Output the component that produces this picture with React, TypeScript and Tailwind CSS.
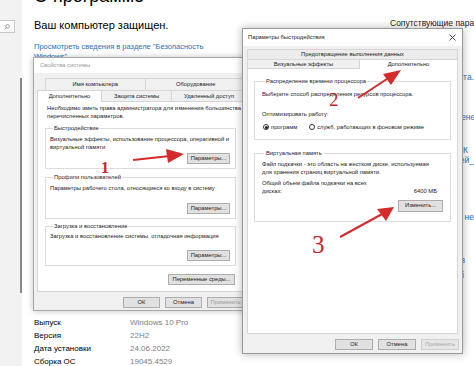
import React from "react";

const F = { fontFamily: "'Liberation Sans', Arial, sans-serif" };

function Btn({ children, className = "" }: { children: React.ReactNode; className?: string }) {
  return (
    <div
      className={`flex items-center justify-center h-[11px] border border-[#adadad] bg-[#e1e1e1] text-[5.8px] leading-none whitespace-nowrap text-[#222] ${className}`}
    >
      {children}
    </div>
  );
}

function Group({ title, children, className = "" }: { title: string; children: React.ReactNode; className?: string }) {
  return (
    <fieldset className={`border border-[#dcdcdc] ${className}`}>
      <legend className="ml-[3px] px-[1px] text-[5.8px] leading-[8px] text-[#222] whitespace-nowrap">{title}</legend>
      {children}
    </fieldset>
  );
}

function SystemDialog() {
  return (
    <div className="absolute left-[33px] top-[57px] w-[215px] h-[254px] flex flex-col bg-[#f0f0f0] border border-[#a8a8a8] shadow-[0_0_6px_rgba(0,0,0,0.25)]">
      <div className="h-[15px] bg-white flex items-center pl-[6px] text-[5.8px] text-[#999]">Свойства системы</div>
      <div className="mt-[5px] flex flex-col text-[5.8px] text-[#222] whitespace-nowrap">
        <div className="flex pl-[11px] h-[12px]">
          <div className="w-[102px] border border-b-0 border-[#d6d6d6] bg-[#f0f0f0] flex items-center justify-center">Имя компьютера</div>
          <div className="w-[103px] border border-b-0 border-l-0 border-[#d6d6d6] bg-[#f0f0f0] flex items-center justify-center">Оборудование</div>
        </div>
        <div className="flex pl-[3px] h-[12px]">
          <div className="w-[65px] border border-b-0 border-[#d6d6d6] bg-white flex items-center justify-center">Дополнительно</div>
          <div className="w-[70px] border border-l-0 border-[#d6d6d6] bg-[#f0f0f0] flex items-center justify-center">Защита системы</div>
          <div className="w-[75px] border border-l-0 border-[#d6d6d6] bg-[#f0f0f0] flex items-center justify-center">Удаленный доступ</div>
        </div>
      </div>
      <div className="mx-[3px] h-[190px] bg-white border border-t-0 border-[#d6d6d6] flex flex-col px-[7px] pt-[2px] text-[5.8px] leading-[8px] text-[#222] whitespace-nowrap">
        <div className="pl-[2px]">
          Необходимо иметь права администратора для изменения большинства
          <br />
          перечисленных параметров.
        </div>
        <Group title="Быстродействие" className="mt-[4px] h-[45px] px-[4px] flex flex-col">
          <div className="mt-[3px]">
            Визуальные эффекты, использование процессора, оперативной и
            <br />
            виртуальной памяти
          </div>
          <Btn className="self-end w-[43px] mt-[2px] mr-[1px]">Параметры...</Btn>
        </Group>
        <Group title="Профили пользователей" className="mt-[4px] h-[46px] px-[4px] flex flex-col">
          <div className="mt-[3px]">Параметры рабочего стола, относящиеся ко входу в систему</div>
          <Btn className="self-end w-[43px] mt-[11px] mr-[1px]">Параметры...</Btn>
        </Group>
        <Group title="Загрузка и восстановление" className="mt-[3px] h-[44px] px-[4px] flex flex-col">
          <div className="mt-[2px]">Загрузка и восстановление системы, отладочная информация</div>
          <Btn className="self-end w-[43px] mt-[10px] mr-[1px]">Параметры...</Btn>
        </Group>
        <Btn className="self-end w-[67px] mt-[8px] mr-[1px]">Переменные среды...</Btn>
      </div>
      <div className="flex gap-[5px] pl-[89px] mt-[5px]">
        <Btn className="w-[37px]">ОК</Btn>
        <Btn className="w-[37px]">Отмена</Btn>
        <Btn className="w-[37px] text-[#999]">Применить</Btn>
      </div>
    </div>
  );
}

function Radio({ on, label }: { on?: boolean; label: string }) {
  return (
    <div className="flex items-center gap-[2px]">
      <div className="w-[6px] h-[6px] rounded-full border border-[#333] bg-white flex items-center justify-center">
        {on && <div className="w-[3px] h-[3px] rounded-full bg-[#222]" />}
      </div>
      <span>{label}</span>
    </div>
  );
}

function PerfDialog() {
  return (
    <div className="absolute left-[242px] top-[28px] w-[221px] h-[326px] flex flex-col bg-[#f0f0f0] border border-[#9a9a9a] shadow-[0_0_8px_rgba(0,0,0,0.3)]">
      <div className="h-[17px] bg-white flex items-center justify-between pl-[5px] pr-[5px] text-[5.8px] text-[#222]">
        <span>Параметры быстродействия</span>
        <svg width="7" height="7" viewBox="0 0 7 7" className="mr-[1px]">
          <path d="M0.5 0.5 L6.5 6.5 M6.5 0.5 L0.5 6.5" stroke="#333" strokeWidth="0.9" />
        </svg>
      </div>
      <div className="mt-[3px] px-[4px] flex flex-col text-[5.8px] text-[#222] whitespace-nowrap">
        <div className="h-[10px] border border-b-0 border-[#d6d6d6] bg-[#ececec] flex items-center justify-center">
          Предотвращение выполнения данных
        </div>
        <div className="flex h-[10px]">
          <div className="w-[113px] border border-[#d6d6d6] bg-[#f0f0f0] flex items-center justify-center">Визуальные эффекты</div>
          <div className="flex-1 border border-b-0 border-l-0 border-[#d6d6d6] bg-white flex items-center justify-center">Дополнительно</div>
        </div>
      </div>
      <div className="mx-[4px] h-[265px] bg-white border border-t-0 border-[#d6d6d6] flex flex-col px-[6px] pt-[8px] text-[5.8px] leading-[8px] text-[#222] whitespace-nowrap">
        <Group title="Распределение времени процессора" className="h-[63px] px-[7px] flex flex-col">
          <div className="mt-[5px]">Выберите способ распределения ресурсов процессора.</div>
          <div className="mt-[12px]">Оптимизировать работу:</div>
          <div className="mt-[5px] flex gap-[12px] pl-[1px]">
            <Radio on label="программ" />
            <Radio label="служб, работающих в фоновом режиме" />
          </div>
        </Group>
        <Group title="Виртуальная память" className="mt-[9px] h-[73px] px-[7px] flex flex-col">
          <div className="mt-[3px]">
            Файл подкачки - это область на жестком диске, используемая
            <br />
            для хранения страниц виртуальной памяти.
          </div>
          <div className="mt-[3px] flex items-end justify-between pr-[6px]">
            <div>
              Общий объем файла подкачки на всех
              <br />
              дисках:
            </div>
            <div>6400 МБ</div>
          </div>
          <Btn className="self-end w-[45px] mt-[5px] h-[12px]">Изменить...</Btn>
        </Group>
      </div>
      <div className="flex gap-[5px] pl-[92px] mt-[5px]">
        <Btn className="w-[38px] border-[#2b7bd0] border-[1.5px]">ОК</Btn>
        <Btn className="w-[38px]">Отмена</Btn>
        <Btn className="w-[38px] text-[#aaa] bg-[#e6e6e6] border-[#cfcfcf]">Применить</Btn>
      </div>
    </div>
  );
}

function Arrows() {
  const red = "#d62b2b";
  return (
    <svg className="absolute inset-0 pointer-events-none" width="474" height="366" viewBox="0 0 474 366">
      <line x1="133" y1="160" x2="170" y2="156" stroke={red} strokeWidth="2.2" />
      <polygon points="184,154 166,149 168,163" fill={red} />
      <line x1="358" y1="98" x2="390" y2="77" stroke={red} strokeWidth="2" />
      <polygon points="401,70 383,74 391,85" fill={red} />
      <line x1="340" y1="237" x2="384" y2="213" stroke={red} strokeWidth="2" />
      <polygon points="394,207 377,209 386,221" fill={red} />
      <text x="101" y="173" fill="#c6262e" fontFamily="'Liberation Serif', serif" fontSize="16" fontWeight="bold">1</text>
      <text x="329" y="106" fill="#c6262e" fontFamily="'Liberation Serif', serif" fontSize="19">2</text>
      <text x="312" y="253" fill="#c6262e" fontFamily="'Liberation Serif', serif" fontSize="25">3</text>
    </svg>
  );
}

export default function App() {
  return (
    <div className="relative w-[474px] h-[366px] overflow-hidden bg-white" style={F}>
      <div className="flex h-full">
        <aside className="w-[22px] shrink-0 bg-[#f2f2f2] flex flex-col pt-[20px]">
          <div className="w-[15px] h-[13px] bg-white border border-l-0 border-[#c8c8c8] flex items-center justify-center">
            <svg width="6" height="6" viewBox="0 0 6 6">
              <circle cx="3.6" cy="2.4" r="1.8" fill="none" stroke="#777" strokeWidth="0.7" />
              <path d="M2.3 3.7 L0.6 5.4" stroke="#777" strokeWidth="0.8" />
            </svg>
          </div>
          <div className="ml-[20px] mt-[45px] w-[1.5px] h-[215px] bg-[#888]" />
        </aside>
        <main className="flex-1 flex pl-[12px]">
          <div className="flex flex-col h-full">
            <div className="-mt-[13px] text-[18px] leading-[18px] text-black whitespace-nowrap">О программе</div>
            <div className="mt-[14px] text-[11px] leading-[13px] text-black whitespace-nowrap">Ваш компьютер защищен.</div>
            <div className="mt-[10px] text-[7.5px] leading-[10px] text-[#2a6fb8] whitespace-nowrap">
              Просмотреть сведения в разделе "Безопасность
              <br />
              Windows"
            </div>
            <div className="mt-auto mb-[-2px] grid grid-cols-[96px_auto] text-[8px] leading-[13px]">
              <div className="text-black">Выпуск</div>
              <div className="text-[#808080]">Windows 10 Pro</div>
              <div className="text-black">Версия</div>
              <div className="text-[#808080]">22H2</div>
              <div className="text-black">Дата установки</div>
              <div className="text-[#808080]">24.06.2022</div>
              <div className="text-black">Сборка ОС</div>
              <div className="text-[#808080]">19045.4529</div>
            </div>
          </div>
          <div className="ml-auto w-[84px] shrink-0 flex flex-col text-[8.5px] leading-[10px] overflow-hidden">
            <div className="mt-[18px] whitespace-nowrap text-[#222]">Сопутствующие параметры</div>
            <div className="mt-[44px] flex justify-end whitespace-nowrap text-[#2a6fb8]">Защита места.</div>
            <div className="mt-[30px] flex justify-end whitespace-nowrap text-[#2a6fb8] mr-[-6px]">Изменен</div>
            <div className="mt-[23px] flex justify-end whitespace-nowrap text-[#2a6fb8] pr-[6px]">этот ПК</div>
            <div className="flex justify-end whitespace-nowrap text-[#2a6fb8]">сетей_</div>
            <div className="mt-[47px] flex justify-end whitespace-nowrap text-[#2a6fb8]">или не</div>
            <div className="mt-[33px] flex justify-end whitespace-nowrap text-[#2a6fb8] pr-[9px]">отзыв</div>
            <div className="mt-[5px] flex justify-end whitespace-nowrap text-[#444] pr-[10px]">і</div>
          </div>
        </main>
      </div>
      <SystemDialog />
      <PerfDialog />
      <Arrows />
    </div>
  );
}
